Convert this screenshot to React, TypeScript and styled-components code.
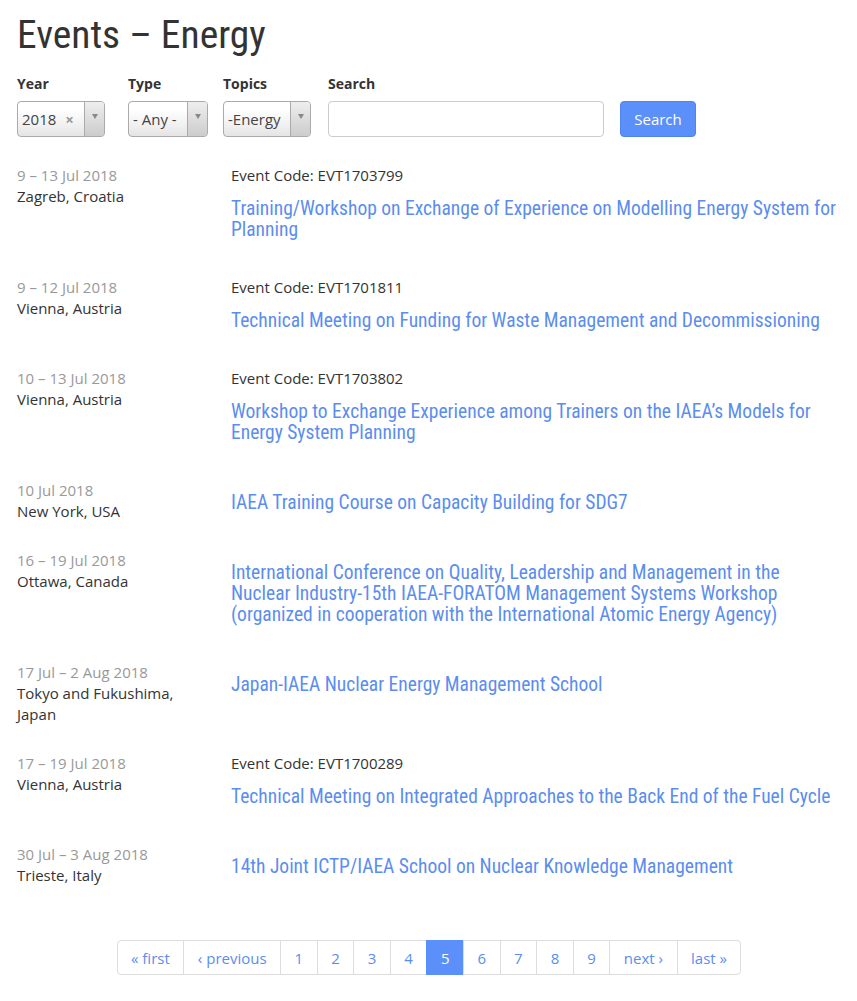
import styled, { createGlobalStyle } from "styled-components";

const GlobalStyle = createGlobalStyle`
  body {
    margin: 0;
    background: #fff;
    font-family: "Open Sans", "Liberation Sans", sans-serif;
    color: #333;
  }
`;

type EventItem = {
  date: string;
  place: string;
  code?: string;
  title: string;
};

const events: EventItem[] = [
  {
    date: "9 – 13 Jul 2018",
    place: "Zagreb, Croatia",
    code: "EVT1703799",
    title: "Training/Workshop on Exchange of Experience on Modelling Energy System for Planning",
  },
  {
    date: "9 – 12 Jul 2018",
    place: "Vienna, Austria",
    code: "EVT1701811",
    title: "Technical Meeting on Funding for Waste Management and Decommissioning",
  },
  {
    date: "10 – 13 Jul 2018",
    place: "Vienna, Austria",
    code: "EVT1703802",
    title: "Workshop to Exchange Experience among Trainers on the IAEA’s Models for Energy System Planning",
  },
  {
    date: "10 Jul 2018",
    place: "New York, USA",
    title: "IAEA Training Course on Capacity Building for SDG7",
  },
  {
    date: "16 – 19 Jul 2018",
    place: "Ottawa, Canada",
    title:
      "International Conference on Quality, Leadership and Management in the Nuclear Industry-15th IAEA-FORATOM Management Systems Workshop (organized in cooperation with the International Atomic Energy Agency)",
  },
  {
    date: "17 Jul – 2 Aug 2018",
    place: "Tokyo and Fukushima, Japan",
    title: "Japan-IAEA Nuclear Energy Management School",
  },
  {
    date: "17 – 19 Jul 2018",
    place: "Vienna, Austria",
    code: "EVT1700289",
    title: "Technical Meeting on Integrated Approaches to the Back End of the Fuel Cycle",
  },
  {
    date: "30 Jul – 3 Aug 2018",
    place: "Trieste, Italy",
    title: "14th Joint ICTP/IAEA School on Nuclear Knowledge Management",
  },
];

const pages = ["« first", "‹ previous", "1", "2", "3", "4", "5", "6", "7", "8", "9", "next ›", "last »"];

const condensed = `"Roboto Condensed", "Liberation Sans Narrow", "DejaVu Sans Condensed", Roboto, sans-serif`;

const Page = styled.div`
  padding: 10px 17px 24px 17px;
`;

const Title = styled.h1`
  margin: 0 0 14px 0;
  font-family: ${condensed};
  font-stretch: condensed;
  font-weight: 400;
  font-size: 39.5px;
  line-height: 50px;
  color: #333;
`;

const Filters = styled.div`
  display: flex;
  align-items: flex-end;
  margin-bottom: 28px;
`;

const Field = styled.div<{ $w: number; $mr: number }>`
  display: flex;
  flex-direction: column;
  width: ${(p) => p.$w}px;
  margin-right: ${(p) => p.$mr}px;
`;

const Label = styled.label`
  font-weight: 700;
  font-size: 14px;
  line-height: 20px;
  margin-bottom: 7px;
  color: #333;
`;

const Select = styled.div`
  display: flex;
  height: 36px;
  box-sizing: border-box;
  border: 1px solid #aaa;
  border-radius: 4px;
  background: linear-gradient(#fff 20%, #f0f0f0 70%, #e4e4e4);
  overflow: hidden;
`;

const SelectValue = styled.div`
  flex: 1;
  display: flex;
  align-items: center;
  padding-left: 4px;
  font-size: 15px;
  color: #444;
  white-space: nowrap;
`;

const Clear = styled.span`
  margin-left: 9px;
  color: #999;
  font-size: 15px;
  font-weight: 700;
`;

const Arrow = styled.div`
  width: 20px;
  border-left: 1px solid #aaa;
  background: linear-gradient(#eee, #ccc);
  display: flex;
  justify-content: center;
  padding-top: 12px;
  box-sizing: border-box;
  &::after {
    content: "";
    border-left: 3px solid transparent;
    border-right: 3px solid transparent;
    border-top: 5px solid #888;
    height: 0;
  }
`;

const Input = styled.input`
  height: 36px;
  box-sizing: border-box;
  border: 1px solid #ccc;
  border-radius: 4px;
  width: 276px;
  font-family: inherit;
`;

const Button = styled.button`
  height: 36px;
  width: 76px;
  margin-left: 16px;
  background: #5b8ff9;
  border: 1px solid #4e84f0;
  border-radius: 4px;
  color: #fff;
  font-family: "Open Sans", sans-serif;
  font-size: 15px;
`;

const Row = styled.div`
  display: flex;
  margin-bottom: 28px;
`;

const Meta = styled.div`
  width: 214px;
  flex-shrink: 0;
  font-size: 15px;
  line-height: 21px;
  padding-right: 40px;
  box-sizing: border-box;
`;

const DateText = styled.div`
  color: #999;
`;

const Place = styled.div`
  color: #333;
`;

const Body = styled.div`
  flex: 1;
  padding-bottom: 9px;
`;

const Code = styled.div`
  font-size: 15px;
  line-height: 21px;
  color: #333;
`;

const Link = styled.a`
  display: block;
  margin-top: 12px;
  font-family: ${condensed};
  font-stretch: condensed;
  font-size: 19.5px;
  line-height: 21px;
  color: #5b8def;
  text-decoration: none;
`;

const Pager = styled.ul`
  display: flex;
  justify-content: center;
  list-style: none;
  margin: 54px 0 0 0;
  padding: 0 0 0 2px;
`;

const PageItem = styled.li<{ $active?: boolean }>`
  height: 35px;
  box-sizing: border-box;
  padding: 0 13.5px;
  display: flex;
  align-items: center;
  font-size: 15px;
  color: ${(p) => (p.$active ? "#fff" : "#5b8def")};
  background: ${(p) => (p.$active ? "#5b8ff9" : "#fff")};
  border: 1px solid ${(p) => (p.$active ? "#5b8ff9" : "#ddd")};
  margin-left: -1px;
  &:first-child {
    border-radius: 4px 0 0 4px;
  }
  &:last-child {
    border-radius: 0 4px 4px 0;
  }
`;

export default function App() {
  return (
    <>
      <GlobalStyle />
      <Page>
        <Title>Events – Energy</Title>
        <Filters>
          <Field $w={88} $mr={23}>
            <Label>Year</Label>
            <Select>
              <SelectValue>
                2018<Clear>×</Clear>
              </SelectValue>
              <Arrow />
            </Select>
          </Field>
          <Field $w={80} $mr={15}>
            <Label>Type</Label>
            <Select>
              <SelectValue>- Any -</SelectValue>
              <Arrow />
            </Select>
          </Field>
          <Field $w={88} $mr={17}>
            <Label>Topics</Label>
            <Select>
              <SelectValue>-Energy</SelectValue>
              <Arrow />
            </Select>
          </Field>
          <Field $w={276} $mr={0}>
            <Label>Search</Label>
            <Input type="text" />
          </Field>
          <Button>Search</Button>
        </Filters>
        {events.map((e, i) => (
          <Row key={i}>
            <Meta>
              <DateText>{e.date}</DateText>
              <Place>{e.place}</Place>
            </Meta>
            <Body>
              {e.code && <Code>Event Code: {e.code}</Code>}
              <Link href="#">{e.title}</Link>
            </Body>
          </Row>
        ))}
        <Pager>
          {pages.map((p) => (
            <PageItem key={p} $active={p === "5"}>
              {p}
            </PageItem>
          ))}
        </Pager>
      </Page>
    </>
  );
}
